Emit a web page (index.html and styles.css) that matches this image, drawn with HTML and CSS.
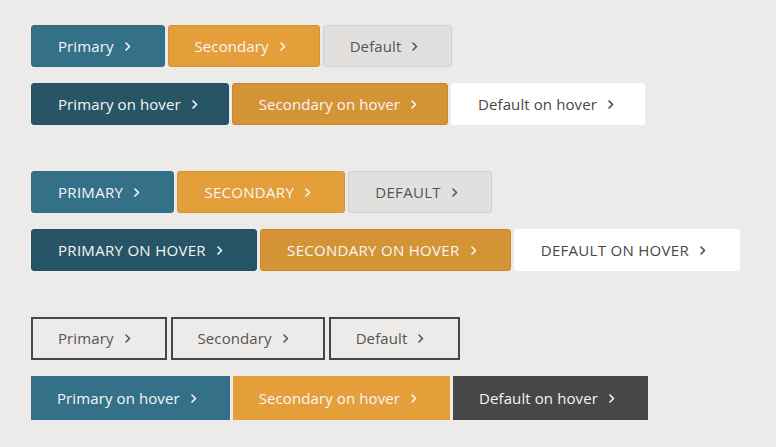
FILE: index.html
```html
<!DOCTYPE html>
<html>
<head>
<meta charset="utf-8">
<link rel="stylesheet" href="styles.css">
</head>
<body>
<div class="page">
  <div class="group">
    <div class="row">
      <a class="btn rounded primary">Primary <svg class="chev" viewBox="0 0 6 9"><path d="M1 1l3.5 3.5L1 8"/></svg></a>
      <a class="btn rounded secondary">Secondary <svg class="chev" viewBox="0 0 6 9"><path d="M1 1l3.5 3.5L1 8"/></svg></a>
      <a class="btn rounded default">Default <svg class="chev" viewBox="0 0 6 9"><path d="M1 1l3.5 3.5L1 8"/></svg></a>
    </div>
    <div class="row">
      <a class="btn rounded primary-hover">Primary on hover <svg class="chev" viewBox="0 0 6 9"><path d="M1 1l3.5 3.5L1 8"/></svg></a>
      <a class="btn rounded secondary-hover">Secondary on hover <svg class="chev" viewBox="0 0 6 9"><path d="M1 1l3.5 3.5L1 8"/></svg></a>
      <a class="btn rounded default-hover">Default on hover <svg class="chev" viewBox="0 0 6 9"><path d="M1 1l3.5 3.5L1 8"/></svg></a>
    </div>
  </div>

  <div class="group caps">
    <div class="row">
      <a class="btn rounded primary">Primary <svg class="chev" viewBox="0 0 6 9"><path d="M1 1l3.5 3.5L1 8"/></svg></a>
      <a class="btn rounded secondary">Secondary <svg class="chev" viewBox="0 0 6 9"><path d="M1 1l3.5 3.5L1 8"/></svg></a>
      <a class="btn rounded default">Default <svg class="chev" viewBox="0 0 6 9"><path d="M1 1l3.5 3.5L1 8"/></svg></a>
    </div>
    <div class="row">
      <a class="btn rounded primary-hover">Primary on hover <svg class="chev" viewBox="0 0 6 9"><path d="M1 1l3.5 3.5L1 8"/></svg></a>
      <a class="btn rounded secondary-hover">Secondary on hover <svg class="chev" viewBox="0 0 6 9"><path d="M1 1l3.5 3.5L1 8"/></svg></a>
      <a class="btn rounded default-hover">Default on hover <svg class="chev" viewBox="0 0 6 9"><path d="M1 1l3.5 3.5L1 8"/></svg></a>
    </div>
  </div>

  <div class="group flat">
    <div class="row">
      <a class="btn outline">Primary <svg class="chev" viewBox="0 0 6 9"><path d="M1 1l3.5 3.5L1 8"/></svg></a>
      <a class="btn outline">Secondary <svg class="chev" viewBox="0 0 6 9"><path d="M1 1l3.5 3.5L1 8"/></svg></a>
      <a class="btn outline">Default <svg class="chev" viewBox="0 0 6 9"><path d="M1 1l3.5 3.5L1 8"/></svg></a>
    </div>
    <div class="row">
      <a class="btn solid primary">Primary on hover <svg class="chev" viewBox="0 0 6 9"><path d="M1 1l3.5 3.5L1 8"/></svg></a>
      <a class="btn solid secondary">Secondary on hover <svg class="chev" viewBox="0 0 6 9"><path d="M1 1l3.5 3.5L1 8"/></svg></a>
      <a class="btn solid dark">Default on hover <svg class="chev" viewBox="0 0 6 9"><path d="M1 1l3.5 3.5L1 8"/></svg></a>
    </div>
  </div>
</div>
</body>
</html>
```

FILE: styles.css
```css
html, body {
  margin: 0;
  padding: 0;
  background: #ecebe9;
}

.page {
  padding: 25px 0 0 31px;
  font-family: "Open Sans", "Noto Sans", sans-serif;
  font-size: 15px;
  display: flex;
  flex-direction: column;
  gap: 46px;
}

.group {
  display: flex;
  flex-direction: column;
  gap: 16px;
}

.row {
  display: flex;
  gap: 3px;
}

.btn {
  box-sizing: border-box;
  height: 42px;
  display: inline-flex;
  align-items: center;
  padding: 0 33px 0 26px;
  white-space: pre;
  color: #f6f6f6;
  border: 1px solid transparent;
  text-decoration: none;
  line-height: 1;
  letter-spacing: 0.1px;
}

.btn .chev {
  width: 6px;
  height: 9px;
  margin-left: 7px;
  fill: none;
  stroke: currentColor;
  stroke-width: 1.6;
  stroke-linecap: round;
  stroke-linejoin: round;
}

.rounded { border-radius: 3px; }

.caps .btn {
  text-transform: uppercase;
  letter-spacing: 0.3px;
}

.primary { background: #347189; border-color: #316c83; }
.secondary { background: #e49f3b; border-color: #d8932f; }
.default { background: #e1e0de; border-color: #d2d1cf; color: #555555; }

.primary-hover { background: #275566; border-color: #245162; }
.secondary-hover { background: #d49436; border-color: #c8882b; }
.default-hover { background: #ffffff; border-color: #ffffff; color: #474747; }

.group:first-child .row:last-child .btn { padding-right: 30px; }

.flat .row:first-child .btn { height: 43px; }
.flat .row:last-child .btn { height: 44px; }
.flat .row:first-child { gap: 4px; }

.outline {
  background: transparent;
  border: 2px solid #474747;
  color: #555555;
  padding-left: 25px;
  padding-right: 34px;
}

.solid {
  border: none;
  padding-left: 26px;
  padding-right: 33px;
}
.solid.primary { background: #347189; }
.solid.secondary { background: #e49f3b; }
.dark { background: #474747; color: #f4f4f4; }
```
